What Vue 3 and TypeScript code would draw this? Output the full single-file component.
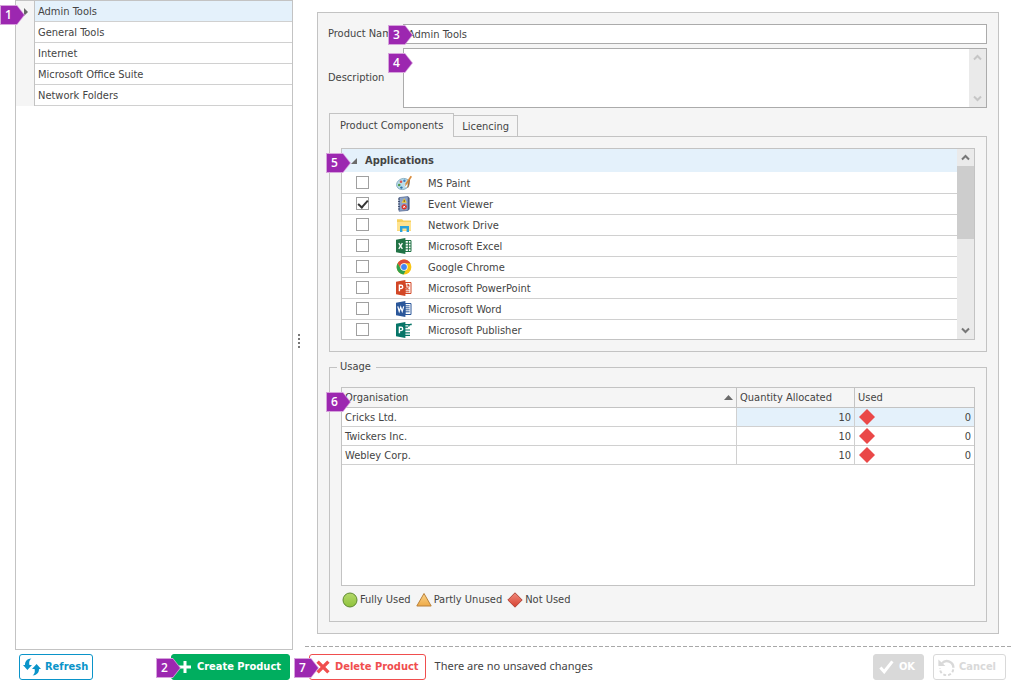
<script setup lang="ts">
import { ref } from 'vue'

interface AppItem {
  name: string
  icon: 'paint' | 'event' | 'folder' | 'excel' | 'chrome' | 'powerpoint' | 'word' | 'publisher'
  checked: boolean
}

interface UsageRow {
  organisation: string
  allocated: number
  used: number
}

const products: string[] = ['Admin Tools', 'General Tools', 'Internet', 'Microsoft Office Suite', 'Network Folders']
const selected = ref(0)
const productName = ref('Admin Tools')
const description = ref('')

const apps = ref<AppItem[]>([
  { name: 'MS Paint', icon: 'paint', checked: false },
  { name: 'Event Viewer', icon: 'event', checked: true },
  { name: 'Network Drive', icon: 'folder', checked: false },
  { name: 'Microsoft Excel', icon: 'excel', checked: false },
  { name: 'Google Chrome', icon: 'chrome', checked: false },
  { name: 'Microsoft PowerPoint', icon: 'powerpoint', checked: false },
  { name: 'Microsoft Word', icon: 'word', checked: false },
  { name: 'Microsoft Publisher', icon: 'publisher', checked: false },
])

const usage: UsageRow[] = [
  { organisation: 'Cricks Ltd.', allocated: 10, used: 0 },
  { organisation: 'Twickers Inc.', allocated: 10, used: 0 },
  { organisation: 'Webley Corp.', allocated: 10, used: 0 },
]
</script>

<template>
  <div class="page">
    <aside class="side">
      <ul class="products">
        <li v-for="(p, i) in products" :key="p">
          <span class="gutter"><i v-if="i === selected" class="current"></i></span>
          <button type="button" class="product" :class="{ active: i === selected }" @click="selected = i">{{ p }}</button>
        </li>
      </ul>
      <span class="marker m1">1</span>
      <div class="side-actions">
        <button type="button" class="btn refresh">
          <svg width="18" height="18" viewBox="0 0 18 18" fill="#0a94c9">
            <path d="M8.4 0.6C4.4 0.8 2 3 2 7H0L4.4 12L9 7H6.4C5.8 4.4 6.4 2 8.4 0.6Z" />
            <path d="M9.6 17.4C13.6 17.2 16 15 16 11H18L13.6 6L9 11H11.6C12.2 13.6 11.6 16 9.6 17.4Z" />
          </svg>
          Refresh
        </button>
        <div class="anchor">
          <button type="button" class="btn create">
            <svg width="14" height="14" viewBox="0 0 14 14"><path d="M7 1V13M1 7H13" stroke="#fff" stroke-width="3" /></svg>
            Create Product
          </button>
          <span class="marker m2">2</span>
        </div>
      </div>
    </aside>

    <div class="splitter"><i></i><i></i><i></i><i></i></div>

    <main class="main">
      <form class="panel" @submit.prevent>
        <div class="fields">
          <label for="pname">Product Name</label>
          <input id="pname" v-model="productName" type="text" class="name" />
          <label for="pdesc">Description</label>
          <div class="desc">
            <textarea id="pdesc" v-model="description"></textarea>
            <div class="bar faint">
              <svg width="9" height="7" viewBox="0 0 9 7"><path d="M1 5.5L4.5 2L8 5.5" /></svg>
              <svg width="9" height="7" viewBox="0 0 9 7"><path d="M1 1.5L4.5 5L8 1.5" /></svg>
            </div>
          </div>
          <span class="marker m3">3</span>
          <span class="marker m4">4</span>
        </div>

        <div class="tabs" role="tablist">
          <button type="button" role="tab" aria-selected="true" class="tab on">Product Components</button>
          <button type="button" role="tab" aria-selected="false" class="tab">Licencing</button>
        </div>
        <section class="tab-body" role="tabpanel">
          <div class="tree">
            <div class="tree-list">
              <div class="group">
                <svg width="7" height="7" viewBox="0 0 7 7"><path d="M6 0V6H0Z" fill="#6b6b6b" /></svg>
                Applications
              </div>
              <label v-for="a in apps" :key="a.name" class="app">
                <input v-model="a.checked" type="checkbox" />
                <svg class="ico" width="16" height="16" viewBox="0 0 16 16">
                  <g v-if="a.icon === 'paint'">
                    <ellipse cx="7" cy="9" rx="6.6" ry="5.4" transform="rotate(-22 7 9)" fill="#b9dcea" stroke="#7fa9bd" stroke-width=".8" />
                    <circle cx="3.2" cy="10" r="1.3" fill="#4f9a4a" />
                    <circle cx="5" cy="6.8" r="1.3" fill="#d9534a" />
                    <circle cx="8.4" cy="5.8" r="1.2" fill="#3c7fc4" />
                    <circle cx="5.4" cy="12.6" r="1.2" fill="#2c6ea3" />
                    <circle cx="10.2" cy="10.6" r="1.5" fill="#f4fafc" />
                    <path d="M14.6 .8L16 1.8L11.2 9L9 11.6L9.6 8.2Z" fill="#d98b3a" />
                    <path d="M14.2 4.4L12.4 12.5L11.2 12.8L12.6 5.8Z" fill="#a86a32" />
                  </g>
                  <g v-else-if="a.icon === 'event'">
                    <path d="M3 1.6L12 .6V14.4L3 15.2Z" fill="#8ea4c9" stroke="#5a6d94" stroke-width=".8" />
                    <path d="M12 .6L13.6 2V13.2L12 14.4Z" fill="#4c5d80" />
                    <path d="M2 3H4M2 5.5H4M2 8H4M2 10.5H4M2 13H4" stroke="#41506f" stroke-width="1" />
                    <path d="M8.2 2.2L10.8 6.8H5.6Z" fill="#f4d03a" />
                    <path d="M8.2 3.8V6" stroke="#5b4a10" stroke-width=".9" />
                    <circle cx="8.2" cy="10.8" r="2.6" fill="#d8332a" />
                    <path d="M7.2 9.8L9.2 11.8M9.2 9.8L7.2 11.8" stroke="#fff" stroke-width=".9" />
                  </g>
                  <g v-else-if="a.icon === 'folder'">
                    <path d="M1 2.2H6L7.4 3.6H15V14H1Z" fill="#f6cf5c" />
                    <path d="M1 5H15V13.6H1Z" fill="#ffe38f" />
                    <path d="M4 9H13V15H10.6V11.6H6.4V15H4Z" fill="#2ba3dc" />
                  </g>
                  <g v-else-if="a.icon === 'chrome'">
                    <circle cx="8" cy="8" r="7.4" fill="#f9c513" />
                    <path d="M1.6 4.3A7.4 7.4 0 0 1 14.4 4.3H8L5 9.6Z" fill="#dd4b3c" />
                    <path d="M1.6 4.3L4.8 9.8L8 11.4H9.6L7.6 15.4A7.4 7.4 0 0 1 1.6 4.3Z" fill="#2fa04f" />
                    <circle cx="8" cy="8" r="3.7" fill="#fff" />
                    <circle cx="8" cy="8" r="2.9" fill="#4285f4" />
                  </g>
                  <g v-else-if="a.icon === 'excel'">
                    <path d="M9 2.5H15V13.5H9Z" fill="#fff" stroke="#217346" stroke-width="1" />
                    <path d="M12.4 2V14M9 5.2H15M9 8H15M9 10.8H15" stroke="#217346" stroke-width="1" />
                    <path d="M0 1.8L9.4 0V16L0 14.2Z" fill="#217346" />
                    <path d="M2.8 5.2L6.4 10.8M6.4 5.2L2.8 10.8" stroke="#fff" stroke-width="1.3" />
                  </g>
                  <g v-else-if="a.icon === 'powerpoint'">
                    <path d="M9 2.5H15V13.5H9Z" fill="#fff" stroke="#d24726" stroke-width="1" />
                    <path d="M9 9.8H13.4M9 11.8H13.4" stroke="#d24726" stroke-width="1" />
                    <path d="M10.4 4.4V7.6H13.4A3 3 0 0 1 9 7.8V4.4Z" fill="#d24726" />
                    <path d="M11.4 3.6A3 3 0 0 1 13.8 6.4H11.4Z" fill="#d24726" />
                    <path d="M0 1.8L9.4 0V16L0 14.2Z" fill="#d24726" />
                    <path d="M3.4 11.2V5.2H5A1.6 1.6 0 0 1 5 8.6H3.4" fill="none" stroke="#fff" stroke-width="1.4" />
                  </g>
                  <g v-else-if="a.icon === 'word'">
                    <path d="M9 2.5H15V13.5H9Z" fill="#fff" stroke="#2b579a" stroke-width="1" />
                    <path d="M9 4.8H13.6M9 6.8H13.6M9 8.8H13.6M9 10.8H13.6" stroke="#2b579a" stroke-width="1" />
                    <path d="M0 1.8L9.4 0V16L0 14.2Z" fill="#2b579a" />
                    <path d="M1.8 5.4L3.2 10.4L4.7 6L6.2 10.4L7.7 5.4" fill="none" stroke="#fff" stroke-width="1.2" />
                  </g>
                  <g v-else>
                    <path d="M9 2.6H15.6M9 5.2H12M9 8H14M9 10.8H14M9 13.4H14" stroke="#077568" stroke-width="1.2" />
                    <path d="M12.6 4.6A3 3 0 0 1 15.6 2" fill="none" stroke="#077568" stroke-width="1.2" />
                    <path d="M0 1.8L9.4 0V16L0 14.2Z" fill="#077568" />
                    <path d="M3.4 11.2V5.2H5A1.6 1.6 0 0 1 5 8.6H3.4" fill="none" stroke="#fff" stroke-width="1.4" />
                  </g>
                </svg>
                <span>{{ a.name }}</span>
              </label>
            </div>
            <div class="bar">
              <svg width="9" height="7" viewBox="0 0 9 7"><path d="M1 5.5L4.5 2L8 5.5" /></svg>
              <div class="thumb"></div>
              <svg width="9" height="7" viewBox="0 0 9 7"><path d="M1 1.5L4.5 5L8 1.5" /></svg>
            </div>
          </div>
          <span class="marker m5">5</span>
        </section>

        <fieldset class="usage">
          <legend>Usage</legend>
          <div class="grid">
            <table>
              <colgroup><col /><col class="c-qty" /><col class="c-used" /></colgroup>
              <thead>
                <tr>
                  <th><div class="sorted">Organisation<svg width="9" height="5" viewBox="0 0 9 5"><path d="M4.5 0L9 5H0Z" fill="#6b6b6b" /></svg></div></th>
                  <th>Quantity Allocated</th>
                  <th>Used</th>
                </tr>
              </thead>
              <tbody>
                <tr v-for="(u, i) in usage" :key="u.organisation" :class="{ focus: i === 0 }">
                  <td>{{ u.organisation }}</td>
                  <td class="num">{{ u.allocated }}</td>
                  <td>
                    <div class="used">
                      <svg width="16" height="16" viewBox="0 0 16 16"><path d="M8 0L16 8L8 16L0 8Z" fill="#ea4848" /></svg>
                      <span>{{ u.used }}</span>
                    </div>
                  </td>
                </tr>
              </tbody>
            </table>
            <span class="marker m6">6</span>
          </div>
          <div class="legend">
            <span>
              <svg width="16" height="16" viewBox="0 0 16 16">
                <defs><linearGradient id="lg" x2="0" y2="1"><stop offset="0" stop-color="#b4d96a" /><stop offset="1" stop-color="#8fc23c" /></linearGradient></defs>
                <circle cx="8" cy="8" r="7" fill="url(#lg)" stroke="#5f8a32" stroke-width="1" />
              </svg>
              Fully Used
            </span>
            <span>
              <svg width="16" height="16" viewBox="0 0 16 16">
                <defs><linearGradient id="lo" x2="0" y2="1"><stop offset="0" stop-color="#fbd48a" /><stop offset="1" stop-color="#eeaa48" /></linearGradient></defs>
                <path d="M8 1.5L15.2 14H.8Z" fill="url(#lo)" stroke="#b9803a" stroke-width="1" stroke-linejoin="round" />
              </svg>
              Partly Unused
            </span>
            <span>
              <svg width="16" height="16" viewBox="0 0 16 16">
                <defs><linearGradient id="lr" x2="0" y2="1"><stop offset="0" stop-color="#f08a7c" /><stop offset="1" stop-color="#d6402f" /></linearGradient></defs>
                <path d="M8 .8L15.2 8L8 15.2L.8 8Z" fill="url(#lr)" stroke="#b0473a" stroke-width="1" stroke-linejoin="round" />
              </svg>
              Not Used
            </span>
          </div>
        </fieldset>
      </form>

      <footer class="footer">
        <div class="anchor">
          <button type="button" class="btn delete">
            <svg width="14" height="14" viewBox="0 0 14 14"><path d="M1.6 1.6L12.4 12.4M12.4 1.6L1.6 12.4" stroke="#f04e4e" stroke-width="3.4" /></svg>
            Delete Product
          </button>
          <span class="marker m7">7</span>
        </div>
        <span class="status">There are no unsaved changes</span>
        <button type="button" class="btn ok" disabled>
          <svg width="15" height="14" viewBox="0 0 15 14"><path d="M1.4 7.6L5.2 11.8L13.4 1.4" fill="none" stroke="#fff" stroke-width="3" /></svg>
          OK
        </button>
        <button type="button" class="btn cancel" disabled>
          <svg width="17" height="17" viewBox="0 0 17 17" fill="none" stroke="#d9d9d9">
            <path d="M4 4.2A6.6 6.6 0 0 1 15.4 8.8" stroke-width="2.4" />
            <path d="M15.2 10.4A6.6 6.6 0 0 1 2 9" stroke-width="2" stroke-dasharray="3 2" />
            <path d="M.4 .4L.4 7H7.4Z" fill="#d9d9d9" stroke="none" />
          </svg>
          Cancel
        </button>
      </footer>
    </main>
  </div>
</template>

<style>
body {
  margin: 0;
  background: #fff;
}
</style>

<style scoped>
.page {
  display: grid;
  grid-template-columns: 293px 12px minmax(0, 1fr);
  min-height: 100vh;
  box-sizing: border-box;
  font: 11px/14px "DejaVu Sans Condensed", "Noto Sans", sans-serif;
  color: #444;
}
.page * {
  box-sizing: border-box;
}
button,
input,
textarea {
  font: inherit;
  color: inherit;
  margin: 0;
}
svg {
  flex: none;
  display: block;
}

/* Numbered callouts lie over the controls they describe */
.marker {
  position: absolute;
  z-index: 1;
  width: 25px;
  height: 20px;
  padding-left: 5px;
  font: 600 12px/19px "Open Sans", "Noto Sans", sans-serif;
  color: #fff;
  background: #d6a3dc;
  clip-path: polygon(0 0, 17px 0, 100% 50%, 17px 100%, 0 100%);
}
.marker::before {
  content: "";
  position: absolute;
  z-index: -1;
  inset: 1px;
  background: #9c27b0;
  clip-path: polygon(0 0, 16px 0, 100% 50%, 16px 100%, 0 100%);
}
.m1 { left: 0; top: 5px; }
.m2 { left: -15px; top: 4px; }
.m3 { left: 60px; top: 1px; }
.m4 { left: 60px; top: 29px; }
.m5 { left: -4px; top: 16px; }
.m6 { left: -16px; top: 4px; }
.m7 { left: -15px; top: 4px; }

.side {
  position: relative;
  display: flex;
  flex-direction: column;
  padding-left: 15px;
}
.products {
  flex: 1;
  margin: 0;
  padding: 0;
  list-style: none;
  border: 1px solid #c3c3c3;
}
.products li {
  display: flex;
  height: 21px;
}
.gutter {
  display: flex;
  align-items: center;
  justify-content: flex-end;
  width: 19px;
  padding-right: 6px;
  background: #f5f5f5;
  border-right: 1px solid #c3c3c3;
}
.current {
  border: 4px solid transparent;
  border-left-color: #666;
  border-right: 0;
}
.product {
  flex: 1;
  padding: 1px 3px 0;
  text-align: left;
  background: #fff;
  border: 0;
  border-bottom: 1px solid #d0d0d0;
}
.product.active {
  background: #e4f1fb;
}
.side-actions {
  display: flex;
  justify-content: space-between;
  padding: 4px 3px 4px 4px;
}

.anchor {
  position: relative;
}
.btn {
  display: flex;
  align-items: center;
  gap: 4px;
  height: 26px;
  padding: 0 4px;
  font-weight: bold;
  white-space: nowrap;
  border: 1px solid;
  border-radius: 3px;
  background: #fff;
}
.refresh { color: #0a94c9; padding: 0 4px 0 3px; }
.create { color: #fff; background: #00ae5f; border-color: #00ae5f; padding: 0 8px 0 6px; gap: 5px; }
.delete { color: #f04e4e; padding: 0 6px 0 6px; gap: 5px; }
.ok { color: #fff; background: #d9d9d9; border-color: #d9d9d9; padding: 0 8px 0 5px; gap: 5px; }
.cancel { color: #d9d9d9; padding: 0 9px 0 4px; }

.splitter {
  display: flex;
  flex-direction: column;
  align-items: center;
  justify-content: center;
  gap: 2px;
  padding-bottom: 2px;
}
.splitter i {
  width: 2px;
  height: 2px;
  background: #777;
}

.main {
  display: flex;
  flex-direction: column;
  min-width: 0;
}
.panel {
  flex: 1;
  display: flex;
  flex-direction: column;
  margin: 12px 12px;
  padding: 11px;
  background: #f5f5f5;
  border: 1px solid #c3c3c3;
}
.fields {
  position: relative;
  display: grid;
  grid-template-columns: 75px minmax(0, 1fr);
  gap: 4px 0;
  margin-left: -1px;
  align-items: center;
}
.name {
  height: 20px;
  padding: 0 4px;
  border: 1px solid #ababab;
  background: #fff;
}
.desc {
  display: flex;
  height: 60px;
  border: 1px solid #ababab;
  background: #fff;
}
textarea {
  flex: 1;
  border: 0;
  padding: 2px 4px;
  resize: none;
  outline: 0;
  overflow: hidden;
}
.bar {
  display: flex;
  flex-direction: column;
  align-items: center;
  justify-content: space-between;
  width: 17px;
  padding: 5px 0;
  background: #eaeaea;
}
.bar path {
  fill: none;
  stroke: #777;
  stroke-width: 2;
}
.faint path {
  stroke: #c6c6c6;
}
.thumb {
  width: 100%;
  height: 73px;
  margin: 5px 0 auto;
  background: #cdcdcd;
}

.tabs {
  display: flex;
  align-items: flex-end;
  margin-top: 5px;
}
.tab {
  height: 21px;
  padding: 1px 8px 0 8px;
  background: #f5f5f5;
  border: 1px solid #c3c3c3;
  border-width: 1px 1px 0 0;
}
.tab.on {
  position: relative;
  z-index: 1;
  height: 24px;
  margin-bottom: -1px;
  padding: 0 10px;
  border-left-width: 1px;
}
.tab-body {
  position: relative;
  padding: 11px;
  border: 1px solid #c3c3c3;
}
.tree {
  display: flex;
  height: 192px;
  border: 1px solid #c3c3c3;
  background: #fff;
}
.tree-list {
  flex: 1;
  overflow: hidden;
}
.group {
  display: flex;
  align-items: center;
  gap: 7px;
  height: 23px;
  margin-bottom: 1px;
  padding: 1px 0 0 9px;
  font-weight: bold;
  background: #e4f1fb;
}
.app {
  display: flex;
  align-items: center;
  height: 21px;
  padding: 0 0 1px 14px;
  border-bottom: 1px solid #d0d0d0;
}
.app input {
  appearance: none;
  display: flex;
  justify-content: center;
  width: 13px;
  height: 13px;
  border: 1px solid #a0a0a0;
  background: #fff;
}
.app input:checked::before {
  content: "";
  width: 4px;
  height: 8px;
  border: solid #333;
  border-width: 0 2px 2px 0;
  transform: rotate(42deg);
}
.app span {
  padding-top: 3px;
}
.ico {
  margin: 0 16px 0 27px;
}

.usage {
  position: relative;
  flex: 1;
  display: flex;
  flex-direction: column;
  min-width: 0;
  margin: 8px 0 0;
  padding: 13px 11px 0;
  border: 1px solid #c3c3c3;
}
legend {
  margin-left: -4px;
  padding: 0 5px 0 3px;
}
.grid {
  position: relative;
  flex: 1;
  background: #fff;
  border: 1px solid #c3c3c3;
}
table {
  width: 100%;
  table-layout: fixed;
  border-spacing: 0;
}
.c-qty { width: 118px; }
.c-used { width: 119px; }
th,
td {
  height: 19px;
  padding: 1px 3px 0;
  text-align: left;
  border-right: 1px solid #d0d0d0;
  border-bottom: 1px solid #d0d0d0;
}
th {
  height: 20px;
  padding-top: 0;
  font-weight: normal;
  background: #f5f5f5;
  border-color: #c3c3c3;
}
td:last-child {
  padding-top: 0;
}
th:last-child,
td:last-child {
  border-right: 0;
}
.sorted,
.used {
  display: flex;
  align-items: center;
  justify-content: space-between;
}
.used svg {
  margin: 1px;
}
td .used {
  height: 18px;
}
.used span {
  padding-top: 1px;
}
.num {
  text-align: right;
}
.focus td + td {
  background: #e4f1fb;
}
.legend {
  display: flex;
  gap: 5px;
  padding: 6px 1px 13px;
}
.legend span {
  display: flex;
  align-items: center;
  gap: 2px;
}

.footer {
  display: flex;
  align-items: center;
  padding: 8px 5px 4px 4px;
  background: repeating-linear-gradient(90deg, #a8a8a8 0 4px, transparent 4px 6px) top / 100% 1px no-repeat;
}
.status {
  flex: 1;
  margin-left: 9px;
  padding-bottom: 2px;
  font-family: "Noto Sans", sans-serif;
}
.ok {
  margin-right: 9px;
}
</style>
